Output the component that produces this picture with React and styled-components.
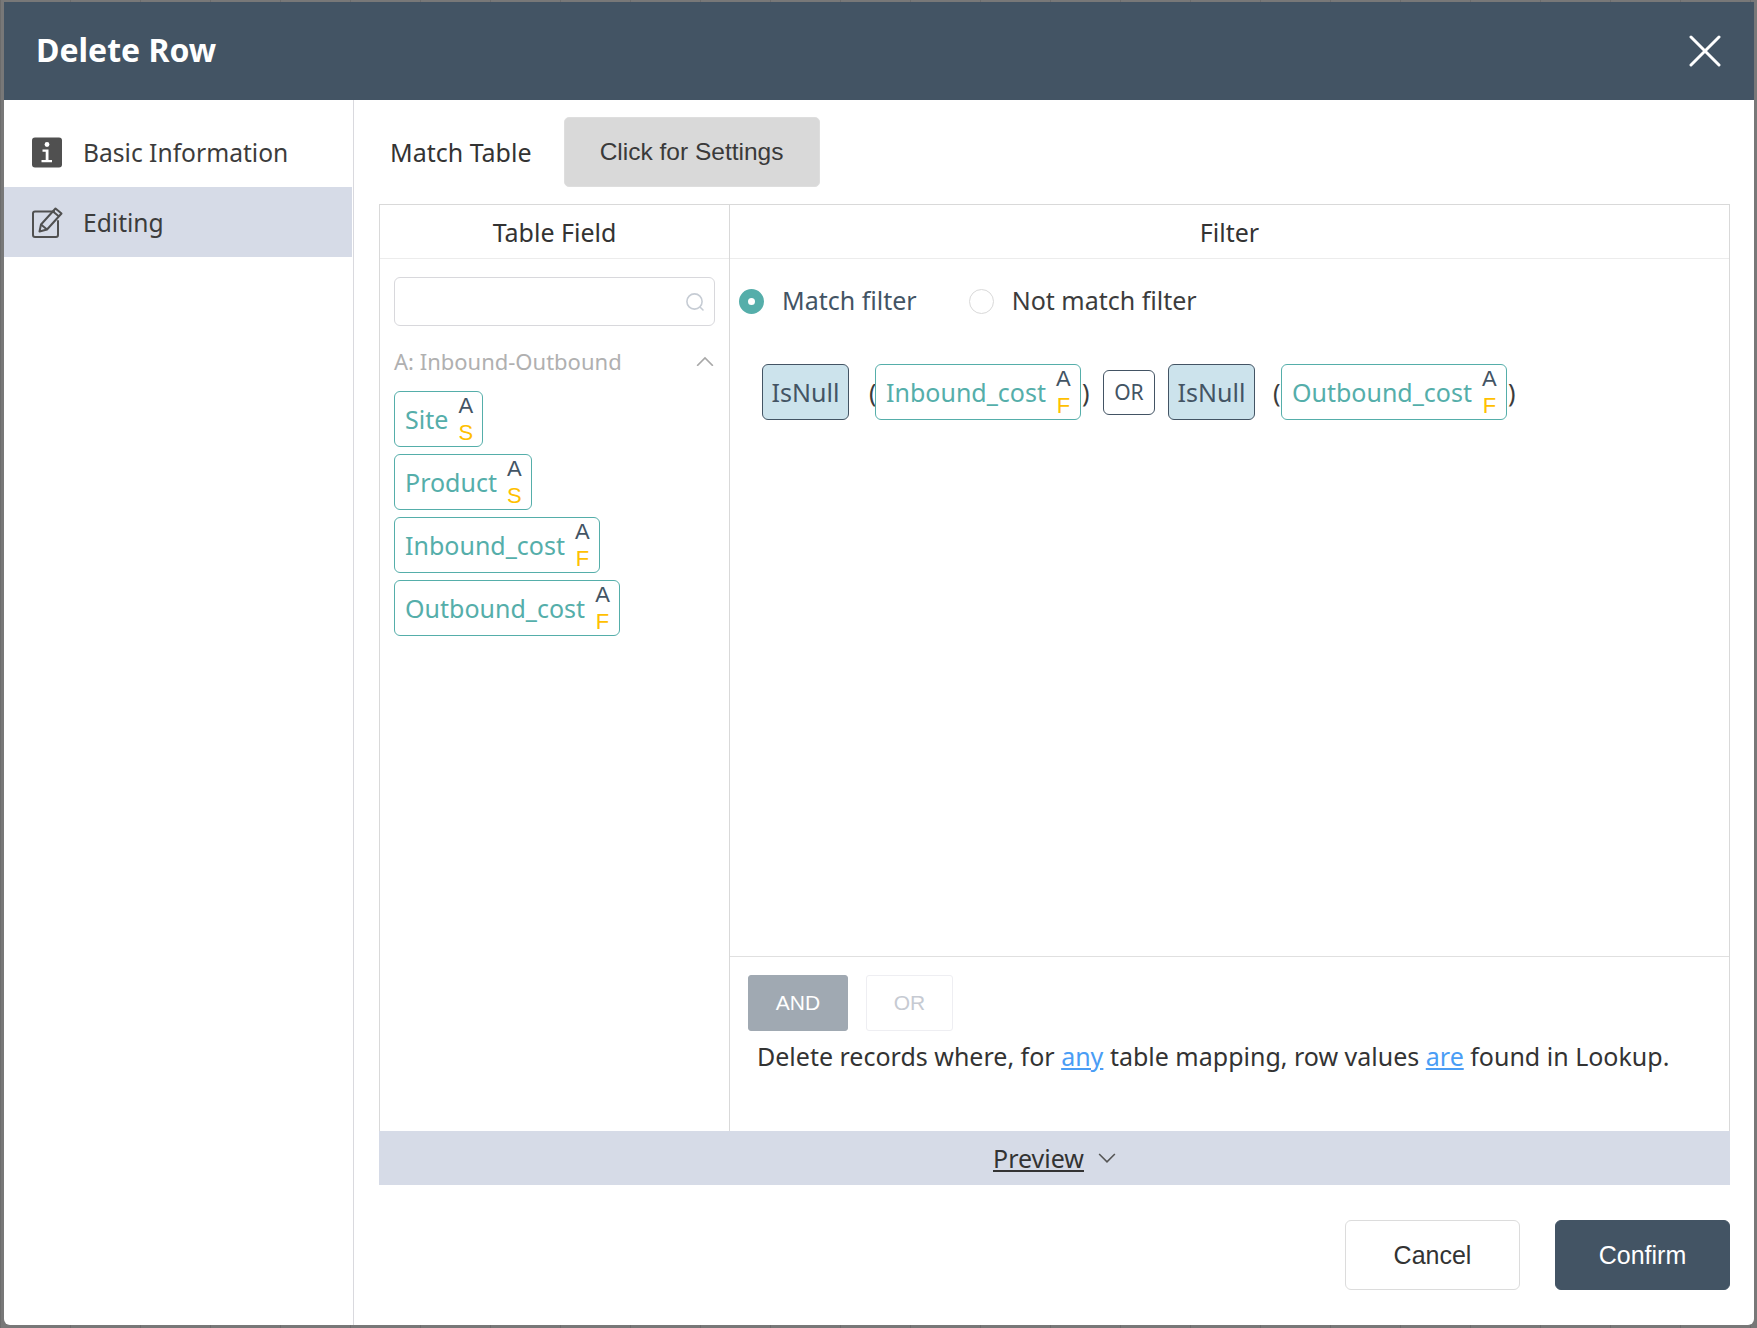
import React, { useState } from "react";
import styled, { createGlobalStyle } from "styled-components";

const GlobalStyle = createGlobalStyle`
  html, body {
    margin: 0;
    padding: 0;
    height: 100%;
    background: #757575;
  }
  * { box-sizing: border-box; }
`;

const Page = styled.div`
  width: 1757px;
  height: 1328px;
  padding: 2px 3px 3px 4px;
  background: repeating-linear-gradient(90deg, #6c6c6c 0 1px, #787878 1px 70px);
  overflow: hidden;
  font-family: "Noto Sans", "Open Sans", sans-serif;
  color: #333;
`;

const Modal = styled.div`
  height: 100%;
  display: flex;
  flex-direction: column;
  background: #fff;
  border-radius: 0 0 6px 6px;
  overflow: hidden;
`;

const Header = styled.header`
  height: 98px;
  flex: none;
  display: flex;
  align-items: center;
  justify-content: space-between;
  padding: 0 33px 0 32px;
  background: #435464;
`;

const Title = styled.h1`
  margin: 0 0 4px;
  font-size: 32px;
  font-weight: 700;
  color: #fff;
`;

const CloseButton = styled.button`
  display: flex;
  padding: 0;
  border: none;
  background: none;
  cursor: pointer;
`;

const Body = styled.div`
  flex: 1;
  display: flex;
  min-height: 0;
`;

const Sidebar = styled.nav`
  width: 350px;
  flex: none;
  padding-top: 17px;
  border-right: 1px solid #d9d9de;
`;

const SideItem = styled.div`
  height: 70px;
  width: 348px;
  display: flex;
  align-items: center;
  gap: 20px;
  padding-left: 28px;
  font-size: 24.6px;
  color: #3c3c3c;
  background: ${(p) => (p.$active ? "#d6dbe7" : "transparent")};
`;

const Main = styled.main`
  flex: 1;
  min-width: 0;
  display: flex;
  flex-direction: column;
  padding: 17px 24px 35px 25px;
`;

const MatchRow = styled.div`
  height: 70px;
  flex: none;
  display: flex;
  align-items: center;
  gap: 32px;
  padding-left: 11px;
  font-size: 25px;
  margin-bottom: 17px;
`;

const SettingsButton = styled.button`
  width: 256px;
  height: 70px;
  border: 1px solid #dedede;
  border-radius: 5px;
  background: #d9d9d9;
  font-family: "Liberation Sans", Arial, sans-serif;
  font-size: 24.5px;
  color: #3a3a3a;
  cursor: pointer;
`;

const Panel = styled.section`
  flex: 1;
  min-height: 0;
  display: flex;
  flex-direction: column;
`;

const Columns = styled.div`
  flex: 1;
  min-height: 0;
  display: grid;
  grid-template-columns: 349px 1fr;
  border: 1px solid #d9d9d9;
  border-bottom: none;
`;

const Column = styled.div`
  display: flex;
  flex-direction: column;
  min-height: 0;
  & + & {
    border-left: 1px solid #d9d9d9;
  }
`;

const ColumnTitle = styled.div`
  height: 54px;
  flex: none;
  display: flex;
  align-items: center;
  justify-content: center;
  font-size: 25px;
  color: #333;
  border-bottom: 1px solid #ececec;
`;

const FieldPane = styled.div`
  padding: 18px 14px 0 14px;
`;

const SearchBox = styled.div`
  height: 49px;
  display: flex;
  align-items: center;
  justify-content: flex-end;
  padding-right: 9px;
  border: 1px solid #d8d8dc;
  border-radius: 6px;
`;

const GroupHeader = styled.div`
  display: flex;
  align-items: center;
  justify-content: space-between;
  margin: 19px 0 14px;
  height: 32px;
  padding-right: 1px;
  font-size: 22px;
  color: #b0b0b0;
`;

const TagList = styled.div`
  display: flex;
  flex-direction: column;
  align-items: flex-start;
  gap: 7px;
`;

const Tag = styled.div`
  height: 56px;
  display: inline-flex;
  align-items: center;
  gap: 10px;
  padding: 0 9px 0 10px;
  border: 1px solid #55aeaa;
  border-radius: 6px;
  background: #fff;
  font-size: 25px;
  color: #55aeaa;
`;

const TagMarks = styled.span`
  width: 15px;
  display: flex;
  flex-direction: column;
  align-items: center;
  font-family: "Liberation Sans", Arial, sans-serif;
  font-size: 22px;
`;

const MarkTop = styled.span`
  display: block;
  height: 27px;
  line-height: 27px;
  color: #435464;
`;

const MarkBottom = styled.span`
  display: block;
  height: 27px;
  line-height: 27px;
  color: #ffc000;
`;

const FilterPane = styled.div`
  flex: 1;
  min-height: 0;
  display: flex;
  flex-direction: column;
`;

const FilterMain = styled.div`
  flex: 1;
  min-height: 0;
  padding: 30px 0 0 9px;
`;

const RadioGroup = styled.div`
  display: flex;
  align-items: center;
  height: 25px;
`;

const RadioOption = styled.label`
  display: inline-flex;
  align-items: center;
  gap: 18px;
  margin-right: 52px;
  font-size: 25px;
  color: ${(p) => (p.$checked ? "#435464" : "#3c3c3c")};
  cursor: pointer;
`;

const RadioText = styled.span`
  margin-bottom: 3px;
`;

const RadioMark = styled.span`
  width: 25px;
  height: 25px;
  flex: none;
  border-radius: 50%;
  border: ${(p) => (p.$checked ? "9px solid #55aeaa" : "1px solid #d9d9d9")};
  background: #fff;
`;

const Expression = styled.div`
  display: flex;
  align-items: center;
  margin: 50px 0 0 23px;
  height: 56px;
`;

const FuncChip = styled.div`
  width: 87px;
  height: 56px;
  display: flex;
  align-items: center;
  justify-content: center;
  border: 1px solid #435464;
  border-radius: 6px;
  background: #cce3ec;
  font-size: 25px;
  color: #435464;
`;

const Paren = styled.span`
  font-size: 25px;
  color: #3c3c3c;
  width: ${(p) => p.$w}px;
  margin-left: ${(p) => p.$ml || 0}px;
`;

const OrChip = styled.div`
  width: 52px;
  height: 45px;
  margin: 0 13px 0 13px;
  display: flex;
  align-items: center;
  justify-content: center;
  border: 1px solid #435464;
  border-radius: 6px;
  font-size: 21px;
  color: #435464;
`;

const FilterFooter = styled.div`
  height: 175px;
  flex: none;
  padding: 18px 0 0 18px;
  border-top: 1px solid #e0e0e0;
`;

const LogicRow = styled.div`
  display: flex;
  gap: 18px;
`;

const LogicButton = styled.button`
  width: ${(p) => p.$w}px;
  height: 56px;
  border-radius: 3px;
  border: 1px solid ${(p) => (p.$active ? "#a0a9b2" : "#eeeef2")};
  background: ${(p) => (p.$active ? "#a0a9b2" : "#fff")};
  color: ${(p) => (p.$active ? "#fff" : "#c6cad2")};
  font-family: "Liberation Sans", Arial, sans-serif;
  font-size: 21px;
  cursor: pointer;
`;

const Sentence = styled.p`
  margin: 8px 0 0 9px;
  font-size: 25px;
  line-height: 34px;
  color: #333;
  white-space: nowrap;
`;

const Hint = styled.a`
  color: #4a9df5;
  text-decoration: underline;
  cursor: pointer;
`;

const PreviewBar = styled.div`
  height: 54px;
  flex: none;
  display: flex;
  align-items: center;
  justify-content: center;
  gap: 14px;
  background: #d6dbe7;
  font-size: 25px;
  color: #333;
  cursor: pointer;
`;

const PreviewLabel = styled.span`
  text-decoration: underline;
`;

const Actions = styled.div`
  flex: none;
  display: flex;
  justify-content: flex-end;
  gap: 35px;
  margin-top: 35px;
`;

const ActionButton = styled.button`
  width: 175px;
  height: 70px;
  border-radius: 6px;
  border: 1px solid ${(p) => (p.$primary ? "#435464" : "#dcdcdc")};
  background: ${(p) => (p.$primary ? "#435464" : "#fff")};
  color: ${(p) => (p.$primary ? "#fff" : "#333")};
  font-family: "Liberation Sans", Arial, sans-serif;
  font-size: 25px;
  cursor: pointer;
`;

const InfoIcon = () => (
  <svg width="31" height="31" viewBox="0 0 31 31">
    <rect width="30" height="30" y="0.5" rx="3" fill="#505050" />
    <circle cx="15" cy="7.5" r="2.4" fill="#fff" />
    <path d="M10.5 12.5h6v10.5h3.5v2.2H9.5V23h4.2v-8.3h-3.2z" fill="#fff" />
  </svg>
);

const EditIcon = () => (
  <svg width="31" height="32" viewBox="0 0 31 32" fill="none" stroke="#505050" strokeWidth="2">
    <path d="M22 5.5H3a2 2 0 0 0-2 2V29a2 2 0 0 0 2 2h21a2 2 0 0 0 2-2V15" strokeLinecap="round" />
    <path d="M9 18.5 23.5 2.5l6 5L15 23.5l-7.5 2z" strokeLinejoin="round" />
    <path d="M21 5.5l6 5" />
    <path d="M9 18.5l6 5" />
  </svg>
);

const CloseIcon = () => (
  <svg width="32" height="32" viewBox="0 0 32 32" stroke="#fff" strokeWidth="3" strokeLinecap="round">
    <path d="M2 2l28 28M30 2 2 30" />
  </svg>
);

const SearchIcon = () => (
  <svg width="20" height="20" viewBox="0 0 20 20" fill="none" stroke="#c6ccd4" strokeWidth="1.6" strokeLinecap="round">
    <circle cx="9.5" cy="9.5" r="7.6" />
    <path d="M15.5 15.5l2.5 2.5" />
  </svg>
);

const Chevron = ({ up, size = 18, color = "#a8a8a8" }) => (
  <svg width={size} height={size * 0.6} viewBox="0 0 18 11" fill="none" stroke={color} strokeWidth="1.6">
    <path d={up ? "M1 10 9 2l8 8" : "M1 1l8 8 8-8"} />
  </svg>
);

const fields = [
  { name: "Site", type: "S" },
  { name: "Product", type: "S" },
  { name: "Inbound_cost", type: "F" },
  { name: "Outbound_cost", type: "F" },
];

const FieldTag = ({ name, type }) => (
  <Tag>
    {name}
    <TagMarks>
      <MarkTop>A</MarkTop>
      <MarkBottom>{type}</MarkBottom>
    </TagMarks>
  </Tag>
);

const App = () => {
  const [matched, setMatched] = useState(true);

  return (
    <Page>
      <GlobalStyle />
      <Modal>
        <Header>
          <Title>Delete Row</Title>
          <CloseButton>
            <CloseIcon />
          </CloseButton>
        </Header>
        <Body>
          <Sidebar>
            <SideItem>
              <InfoIcon />
              Basic Information
            </SideItem>
            <SideItem $active>
              <EditIcon />
              Editing
            </SideItem>
          </Sidebar>
          <Main>
            <MatchRow>
              Match Table
              <SettingsButton>Click for Settings</SettingsButton>
            </MatchRow>
            <Panel>
              <Columns>
                <Column>
                  <ColumnTitle>Table Field</ColumnTitle>
                  <FieldPane>
                    <SearchBox>
                      <SearchIcon />
                    </SearchBox>
                    <GroupHeader>
                      A: Inbound-Outbound
                      <Chevron up />
                    </GroupHeader>
                    <TagList>
                      {fields.map((f) => (
                        <FieldTag key={f.name} name={f.name} type={f.type} />
                      ))}
                    </TagList>
                  </FieldPane>
                </Column>
                <Column>
                  <ColumnTitle>Filter</ColumnTitle>
                  <FilterPane>
                    <FilterMain>
                      <RadioGroup>
                        <RadioOption $checked={matched} onClick={() => setMatched(true)}>
                          <RadioMark $checked={matched} />
                          <RadioText>Match filter</RadioText>
                        </RadioOption>
                        <RadioOption $checked={!matched} onClick={() => setMatched(false)}>
                          <RadioMark $checked={!matched} />
                          <RadioText>Not match filter</RadioText>
                        </RadioOption>
                      </RadioGroup>
                      <Expression>
                        <FuncChip>IsNull</FuncChip>
                        <Paren $w={6} $ml={20}>(</Paren>
                        <FieldTag name="Inbound_cost" type="F" />
                        <Paren $w={8} $ml={1}>)</Paren>
                        <OrChip>OR</OrChip>
                        <FuncChip>IsNull</FuncChip>
                        <Paren $w={8} $ml={18}>(</Paren>
                        <FieldTag name="Outbound_cost" type="F" />
                        <Paren $w={9} $ml={1}>)</Paren>
                      </Expression>
                    </FilterMain>
                    <FilterFooter>
                      <LogicRow>
                        <LogicButton $active $w={100}>AND</LogicButton>
                        <LogicButton $w={87}>OR</LogicButton>
                      </LogicRow>
                      <Sentence>
                        Delete records where, for <Hint>any</Hint> table mapping, row values <Hint>are</Hint> found in Lookup.
                      </Sentence>
                    </FilterFooter>
                  </FilterPane>
                </Column>
              </Columns>
              <PreviewBar>
                <PreviewLabel>Preview</PreviewLabel>
                <Chevron size={18} color="#555" />
              </PreviewBar>
            </Panel>
            <Actions>
              <ActionButton>Cancel</ActionButton>
              <ActionButton $primary>Confirm</ActionButton>
            </Actions>
          </Main>
        </Body>
      </Modal>
    </Page>
  );
};

export default App;
